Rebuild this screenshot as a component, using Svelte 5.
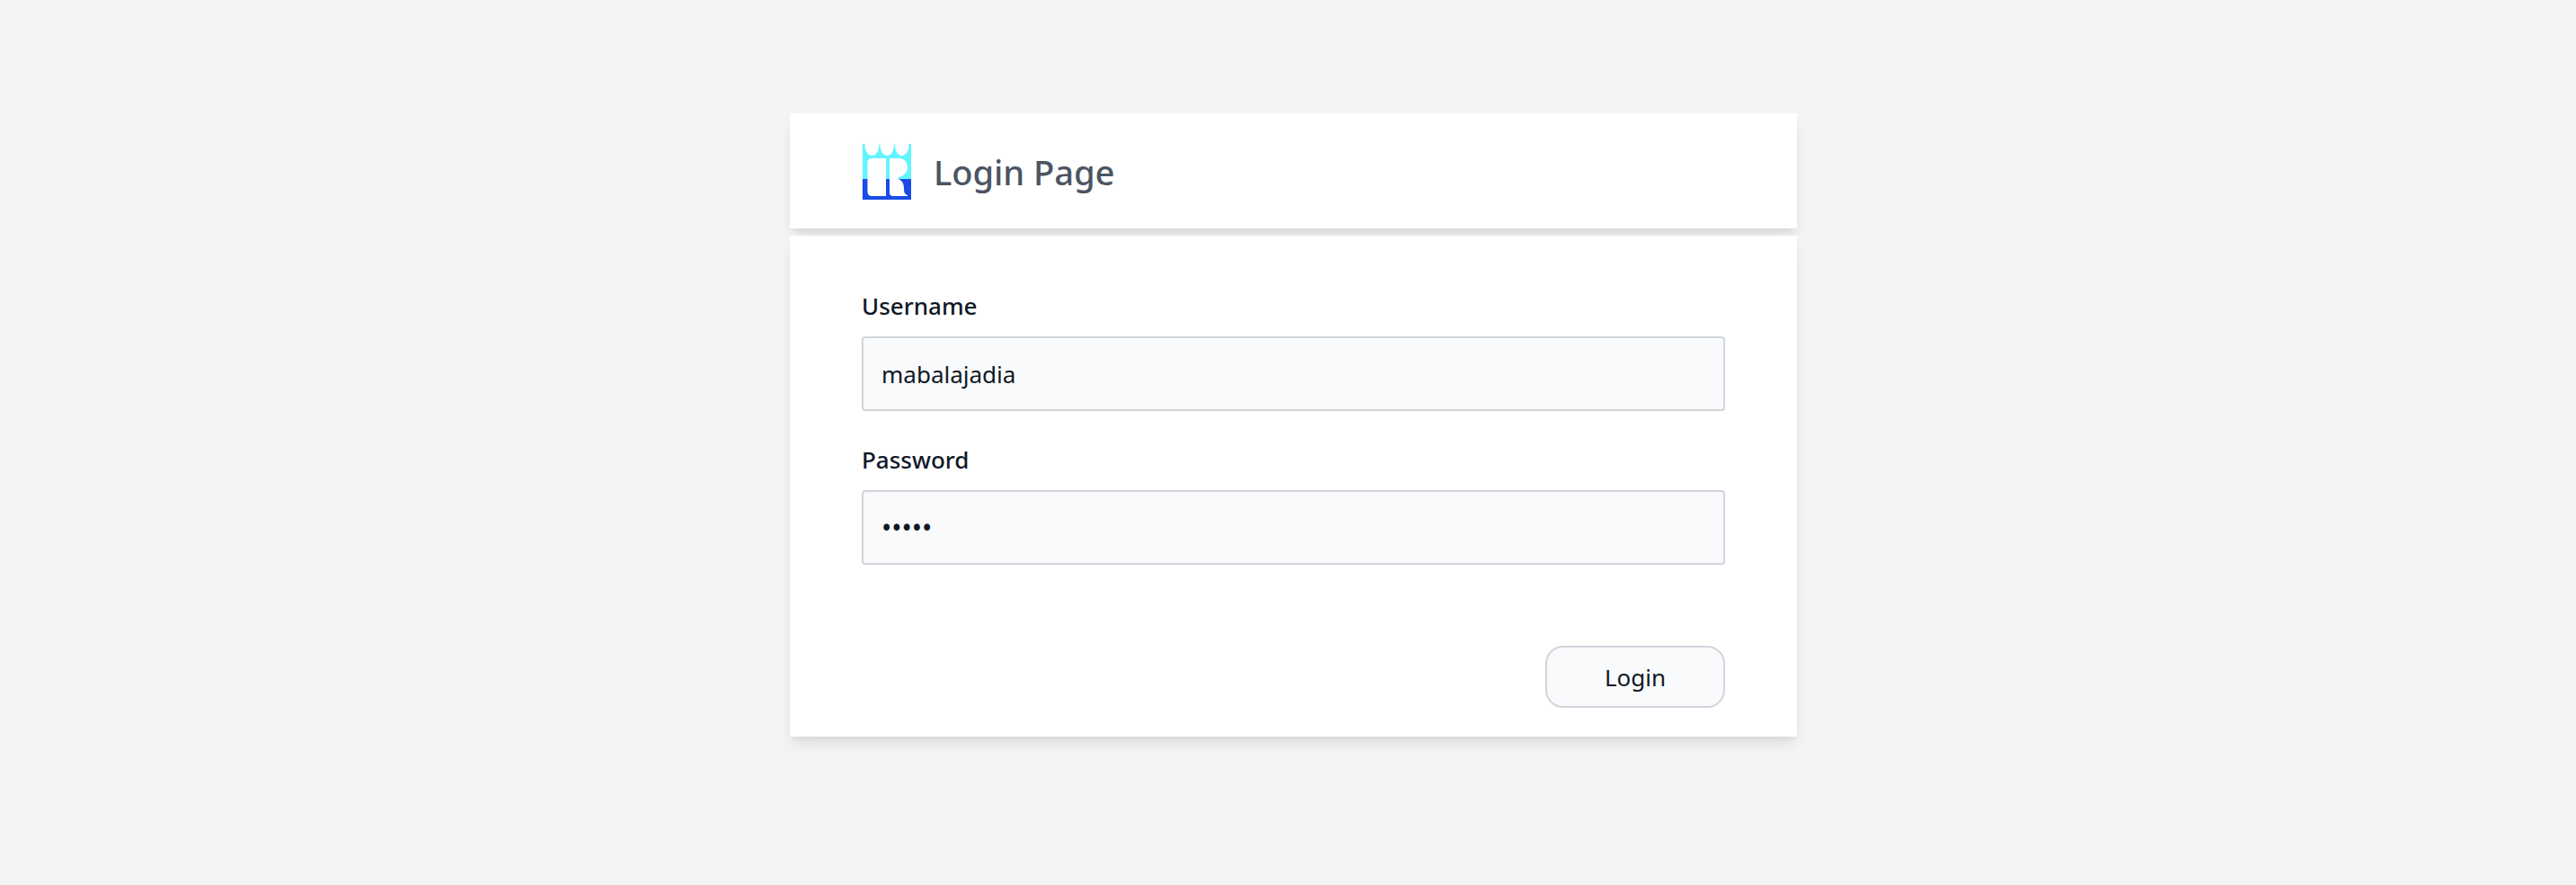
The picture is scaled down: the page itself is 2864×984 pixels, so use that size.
<script>
  let username = $state('mabalajadia');
  let password = $state('12345');
</script>

<div class="page">
  <header class="card head">
    <svg class="logo" viewBox="0 0 54 62" aria-hidden="true">
      <rect width="54" height="39" fill="#62f5ff" />
      <rect y="39" width="54" height="23" fill="#1a4be8" />
      <path fill="#fff" d="M2.500 0H18.500C18.500 8 15 13 10.500 13C6 13 2.500 8 2.500 0zM19.500 0H35C35 8 31.500 13 27.250 13C23 13 19.500 8 19.500 0zM36 0H51.500C51.500 8 48 13 43.750 13C39.500 13 36 8 36 0z" />
      <path fill="#fff" d="M10 16H26V58H10C7.500 58 5.500 56 5.500 53.500V20.500C5.500 18 7.500 16 10 16z" />
      <path fill="#fff" d="M30 16H40C46 16 50 20 50 26C50 31 47 34 43 36L38 38.500L40 39C44 41 46 44 46 50C46 54 47 56 50 57V58H34C31.500 58 30 56.500 30 54.500z" />
      <rect x="26" y="18" width="4" height="18" fill="#62f5ff" />
      <rect x="26" y="39" width="4" height="19" fill="#1a4be8" />
    </svg>
    <h1>Login Page</h1>
  </header>

  <form class="card body" onsubmit={(e) => e.preventDefault()}>
    <label class="field">
      <span>Username</span>
      <input type="text" bind:value={username} />
    </label>
    <label class="field">
      <span>Password</span>
      <input class="secret" type="password" bind:value={password} />
    </label>
    <div class="actions">
      <button type="submit">Login</button>
    </div>
  </form>
</div>

<style>
  :global(body) {
    margin: 0;
    background: #f3f4f6;
    font-family: "Noto Sans", "Open Sans", sans-serif;
  }
  .page {
    box-sizing: border-box;
    height: 984px;
    padding: 126px 0 0 12px;
    display: flex;
    flex-direction: column;
    align-items: center;
    gap: 8px;
  }
  .card {
    box-sizing: border-box;
    width: 1120px;
    background: #fff;
    box-shadow: 0 10px 15px -3px rgba(0, 0, 0, 0.1), 0 4px 6px -2px rgba(0, 0, 0, 0.05);
  }
  .head {
    height: 128px;
    padding: 0 80px 0 81px;
    display: flex;
    align-items: center;
    gap: 25px;
  }
  .logo {
    width: 54px;
    height: 62px;
    flex: none;
    margin-top: 2px;
  }
  h1 {
    margin: 2px 0 0;
    font-size: 38px;
    line-height: 48px;
    font-weight: 500;
    color: #4b5563;
  }
  .body {
    height: 557px;
    padding: 60px 80px 32px;
    display: flex;
    flex-direction: column;
  }
  .field {
    display: flex;
    flex-direction: column;
    gap: 16px;
    margin-bottom: 36px;
  }
  .field span {
    font-size: 26px;
    line-height: 36px;
    font-weight: 500;
    color: #111827;
  }
  input {
    box-sizing: border-box;
    width: 100%;
    height: 83px;
    padding: 0 20px;
    border: 2px solid #d1d5db;
    border-radius: 4px;
    background: #f9fafb;
    font: inherit;
    font-size: 26px;
    color: #111827;
    outline: none;
  }
  .secret {
    font-size: 30px;
  }
  .actions {
    margin-top: auto;
    display: flex;
    justify-content: flex-end;
  }
  button {
    width: 200px;
    height: 69px;
    border: 2px solid #d1d5db;
    border-radius: 20px;
    background: #f9fafb;
    font: inherit;
    font-size: 26px;
    color: #111827;
    padding: 0;
  }
</style>
